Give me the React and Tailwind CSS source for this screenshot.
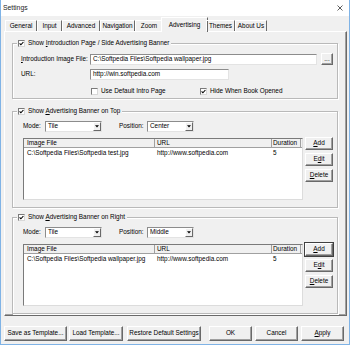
import React from "react";

const Btn = ({ children, className = "", focus = false }) => (
  <div
    className={`flex items-center justify-center bg-[#f0f0f0] border border-t-white border-l-white border-r-[#696969] border-b-[#696969] shadow-[inset_-1px_-1px_0_#a0a0a0] ${focus ? "outline outline-1 outline-[#404040]" : ""} ${className}`}
  >
    {children}
  </div>
);

const Check = ({ checked }) => (
  <span className="w-[7px] h-[7px] bg-white border border-t-[#7a7a7a] border-l-[#7a7a7a] border-r-[#d8d8d8] border-b-[#d8d8d8] flex items-center justify-center shrink-0">
    {checked && (
      <svg width="5" height="5" viewBox="0 0 5 5">
        <path d="M0.6 2.4 L1.9 3.8 L4.4 1" stroke="#000" strokeWidth="1.1" fill="none" />
      </svg>
    )}
  </span>
);

const U = ({ children }) => <span className="underline underline-offset-[1px]">{children}</span>;

const Field = ({ value, className = "" }) => (
  <div className={`h-[11px] bg-white border border-t-[#8c8c8c] border-l-[#8c8c8c] border-r-[#e3e3e3] border-b-[#e3e3e3] flex items-center pl-[2px] ${className}`}>
    {value}
  </div>
);

const Select = ({ value, className = "" }) => (
  <div className={`flex h-[11px] bg-white border border-t-[#8c8c8c] border-l-[#8c8c8c] border-r-[#e3e3e3] border-b-[#e3e3e3] ${className}`}>
    <span className="flex-1 pl-[2px] flex items-center">{value}</span>
    <span className="w-[8px] h-full bg-[#f0f0f0] flex items-center justify-center border border-t-white border-l-white border-r-[#696969] border-b-[#696969]">
      <svg width="4" height="3" viewBox="0 0 4 3">
        <path d="M0 0.3H4L2 2.6Z" fill="#000" />
      </svg>
    </span>
  </div>
);

const Legend = ({ children }) => (
  <div className="absolute top-[-5px] left-[4px] h-[9px] flex items-center gap-[3px] bg-[#f0f0f0] pl-[1px] pr-[2px]">
    <Check checked />
    <span>{children}</span>
  </div>
);

const Group = ({ className = "", legend, children }) => (
  <div className={`relative w-[326px] border border-[#b9b9b9] shadow-[inset_1px_1px_0_#fff,1px_1px_0_#fff] ${className}`}>
    <Legend>{legend}</Legend>
    {children}
  </div>
);

const BannerGroup = ({ legend, mode, position, posWidth, file, focusAdd, className }) => (
  <Group legend={legend} className={`h-[97px] ${className}`}>
    <div className="pl-[10px] pt-[9px] flex items-center h-[20px] box-border">
      <span className="w-[22px]">Mode:</span>
      <Select value={mode} className="w-[57px]" />
      <span className="ml-[17px] w-[28px]">Position:</span>
      <Select value={position} className={posWidth} />
    </div>
    <div className="pl-[10px] mt-[6px] flex items-start">
      <div className="w-[280px] h-[62px] bg-white border border-t-[#7a7a7a] border-l-[#7a7a7a] border-r-[#dcdcdc] border-b-[#dcdcdc] flex flex-col">
        <div className="flex h-[9px] bg-[#f0f0f0] border-b border-[#a0a0a0]">
          <div className="w-[131px] pl-[3px] flex items-center border-r border-[#a0a0a0]">Image File</div>
          <div className="w-[117px] pl-[2px] flex items-center border-r border-[#a0a0a0]">URL</div>
          <div className="w-[29px] pl-[1px] flex items-center border-r border-[#a0a0a0]">Duration</div>
        </div>
        <div className="flex h-[11px] items-center">
          <div className="w-[131px] pl-[3px] whitespace-nowrap">{file}</div>
          <div className="w-[117px] pl-[2px]">http://www.softpedia.com</div>
          <div className="w-[29px] pl-[1px]">5</div>
        </div>
      </div>
      <div className="ml-[2px] mt-[-1px] flex flex-col gap-[3px]">
        <Btn className="w-[28px] h-[13px]" focus={focusAdd}><U>A</U>dd</Btn>
        <Btn className="w-[28px] h-[13px]">E<U>d</U>it</Btn>
        <Btn className="w-[28px] h-[13px]"><U>D</U>elete</Btn>
      </div>
    </div>
  </Group>
);

const tabs = [
  ["General", "w-[32px]"],
  ["Input", "w-[25px]"],
  ["Advanced", "w-[38px]"],
  ["Navigation", "w-[35px]"],
  ["Zoom", "w-[28px]"],
  ["Advertising", "w-[41px]"],
  ["Themes", "w-[29px]"],
  ["About Us", "w-[32px]"],
];

export default function App() {
  return (
    <div className="w-[350px] h-[345px] bg-[#f0f0f0] border border-t-0 border-[#7fb3e6] flex flex-col font-['Liberation_Sans',Arial,sans-serif] text-[6.4px] leading-none text-black overflow-hidden">
      {/* title bar */}
      <div className="h-[16px] bg-white flex items-center justify-between pl-[2px] pr-[6px] shrink-0">
        <span className="text-[6.8px] text-[#222]">Settings</span>
        <svg width="6" height="6" viewBox="0 0 6 6">
          <path d="M0.5 0.5L5.5 5.5M5.5 0.5L0.5 5.5" stroke="#333" strokeWidth="0.8" />
        </svg>
      </div>

      {/* tabs */}
      <div className="flex items-end h-[13px] mt-[2px] pl-[4px] relative z-10">
        {tabs.map(([t, w]) =>
          t === "Advertising" ? (
            <div
              key={t}
              className={`${w} h-[14px] mb-[-1px] -ml-[2px] -mr-[2px] px-[2px] box-content flex items-center justify-center bg-[#f0f0f0] border border-b-0 border-t-white border-l-white border-r-[#696969] whitespace-nowrap`}
            >
              {t}
            </div>
          ) : (
            <div
              key={t}
              className={`${w} h-[11px] flex items-center justify-center border border-b-0 border-t-white border-l-white border-r-[#696969] whitespace-nowrap`}
            >
              {t}
            </div>
          )
        )}
      </div>

      {/* panel */}
      <div className="ml-[3px] w-[343px] h-[285px] border border-t-white border-l-white border-r-[#696969] border-b-[#696969] shadow-[inset_-1px_-1px_0_#a0a0a0] pl-[7px] pt-[11px] shrink-0">
        <Group legend={<>Show <U>I</U>ntroduction Page / Side Advertising Banner</>} className="h-[56px]">
          <div className="pl-[8px] pt-[9px]">
            <div className="flex items-center h-[12px]">
              <span className="w-[69px]"><U>I</U>ntroduction Image File:</span>
              <Field value="C:\Softpedia Files\Softpedia wallpaper.jpg" className="w-[227px]" />
              <Btn className="ml-[4px] w-[12px] h-[12px]">...</Btn>
            </div>
            <div className="flex items-center h-[12px] mt-[3px]">
              <span className="w-[69px]">URL:</span>
              <Field value="http://win.softpedia.com" className="w-[139px]" />
            </div>
            <div className="flex items-center h-[10px] mt-[6px] pl-[70px]">
              <div className="w-[109px] flex items-center gap-[3px]">
                <Check />
                <span>Use Default Intro Page</span>
              </div>
              <div className="flex items-center gap-[3px]">
                <Check checked />
                <span>Hide When Book Opened</span>
              </div>
            </div>
          </div>
        </Group>

        <BannerGroup
          className="mt-[12px]"
          legend={<>Show <U>A</U>dvertising Banner on Top</>}
          mode="Tile"
          position="Center"
          posWidth="w-[47px]"
          file="C:\Softpedia Files\Softpedia test.jpg"
        />
        <BannerGroup
          className="mt-[9px]"
          legend={<>Show <U>A</U>dvertising Banner on Right</>}
          mode="Tile"
          position="Middle"
          posWidth="w-[47px]"
          file="C:\Softpedia Files\Softpedia wallpaper.jpg"
          focusAdd
        />
      </div>

      {/* bottom buttons */}
      <div className="flex items-center mt-[10px] pl-[3px]">
        <Btn className="w-[63px] h-[15px]">Save as Template...</Btn>
        <Btn className="ml-[2px] w-[54px] h-[15px]">Load Template...</Btn>
        <Btn className="ml-[4px] w-[74px] h-[15px]">Restore Default Settings</Btn>
        <Btn className="ml-[8px] w-[43px] h-[15px]">OK</Btn>
        <Btn className="ml-[3px] w-[43px] h-[15px]">Cancel</Btn>
        <Btn className="ml-[3px] w-[43px] h-[15px]"><U>A</U>pply</Btn>
      </div>
    </div>
  );
}
